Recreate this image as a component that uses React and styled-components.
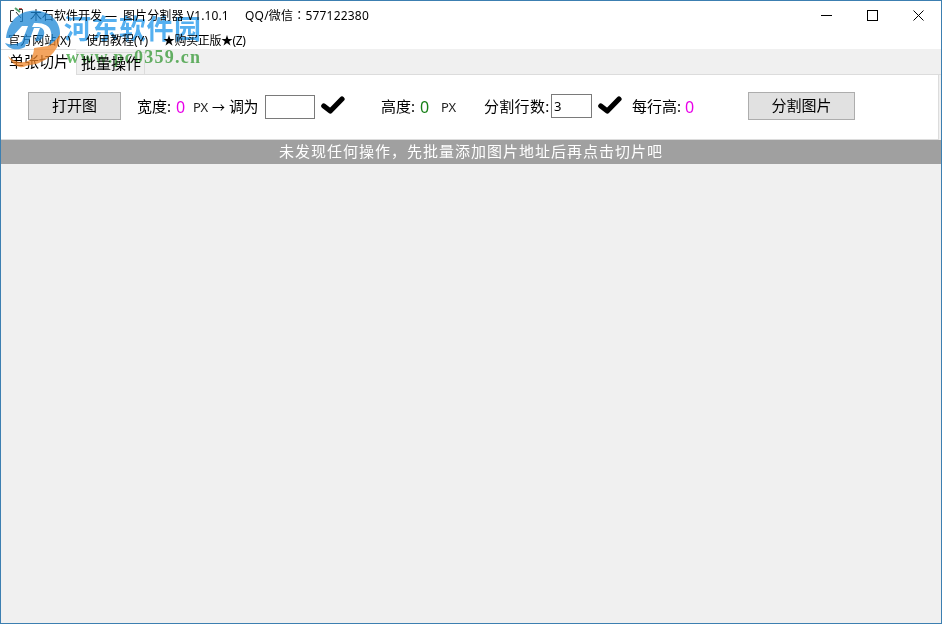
import React from 'react';
import styled, { createGlobalStyle } from 'styled-components';

const Global = createGlobalStyle`
  * { box-sizing: border-box; }
  body { margin: 0; overflow: hidden; }
  button, input { font: inherit; color: inherit; padding: 0; border-radius: 0; outline: none; }
`;

const Window = styled.div`
  position: relative;
  display: flex;
  flex-direction: column;
  width: 942px;
  height: 624px;
  border: 1px solid #3c7fb1;
  background: #f0f0f0;
  color: #000;
  font-family: "Noto Sans", "Noto Sans CJK SC", sans-serif;
  white-space: pre;
`;

const TitleBar = styled.header`
  display: flex;
  align-items: center;
  height: 29px;
  padding-left: 8px;
  background: #fff;
  font-size: 12px;
  line-height: 16px;
`;

const Spacer = styled.div`
  flex: 1;
`;

const Label = styled.span`
  flex: none;
  width: ${p => p.$w}px;
  margin-left: ${p => p.$gap || 0}px;
  letter-spacing: ${p => p.$ls || 0}px;
`;

const TitleText = styled(Label)`
  padding-top: 1px;
`;

const ContactText = styled(Label)`
  padding-bottom: 1px;
`;

const WideColon = styled.span`
  font-family: "Noto Sans CJK TC", sans-serif;
`;

const CaptionButton = styled.button`
  display: grid;
  place-items: center;
  width: 46px;
  height: 29px;
  border: 0;
  background: transparent;
`;

const MenuBar = styled.nav`
  display: flex;
  align-items: center;
  height: 19px;
  padding-left: 7px;
  background: #fff;
  font-size: 12px;
`;

const TabStrip = styled.div`
  display: flex;
  align-items: flex-end;
  height: 26px;
  border-bottom: 1px solid #dcdcdc;
`;

const Tab = styled.div`
  height: ${p => (p.$active ? 26 : 22)}px;
  width: ${p => (p.$active ? 75 : 69)}px;
  margin-bottom: ${p => (p.$active ? -1 : 0)}px;
  padding-left: ${p => (p.$active ? 8 : 4)}px;
  border: 1px solid #dcdcdc;
  border-width: ${p => (p.$active ? '1px 0 0 0' : '1px 1px 0 1px')};
  background: ${p => (p.$active ? '#fff' : '#f0f0f0')};
  font-size: 15px;
  line-height: ${p => (p.$active ? 22 : 20)}px;
`;

const Panel = styled.section`
  display: flex;
  align-items: flex-start;
  height: 65px;
  margin-right: 2px;
  padding: 17px 0 0 27px;
  border-right: 1px solid #dcdcdc;
  border-bottom: 1px solid #dcdcdc;
  background: #fff;
  font-size: 15px;
  line-height: 28px;
`;

const PushButton = styled.button`
  flex: none;
  width: ${p => p.$w}px;
  height: 28px;
  margin-left: ${p => p.$gap || 0}px;
  padding-bottom: 2px;
  border: 1px solid #adadad;
  background: #e1e1e1;
  font-size: 15px;
  line-height: 24px;
`;

const Value = styled(Label)`
  padding-left: 1px;
  color: ${p => p.$color};
  font-size: 16px;
  line-height: 30px;
`;

const Unit = styled(Label)`
  font-size: 13px;
  line-height: 30px;
  color: #222;
`;

const Arrow = styled(Label)`
  font-size: 13px;
  line-height: 30px;
`;

const Field = styled.input`
  flex: none;
  width: ${p => p.$w}px;
  height: 24px;
  margin: ${p => p.$top}px 0 0 ${p => p.$gap || 0}px;
  padding: 0 0 1px 2px;
  border: 1px solid #7a7a7a;
  background: #fff;
  font-size: 13px;
`;

const Check = styled.svg`
  flex: none;
  margin: 4px 0 0 ${p => p.$gap}px;
`;

const Status = styled.div`
  height: 24px;
  background: #a0a0a0;
  color: #fff;
  font-size: 15px;
  letter-spacing: 1px;
  line-height: 22px;
  text-align: center;
`;

const Watermark = styled.svg`
  position: absolute;
  left: -1px;
  top: -1px;
  pointer-events: none;
  mix-blend-mode: ${p => p.$blend || 'normal'};
`;

const AppIcon = () => (
  <svg width="16" height="18" viewBox="0 0 16 18" fill="none" stroke="#333">
    <path d="M5 3.500H1.500V14.500H4" />
    <path d="M10 2.500H13.500V14.500H11M7 5L12 11" />
    <path d="M6 1L11 5" stroke="#54a06b" strokeWidth="2" />
    <path d="M10 1.500h3" stroke="#c55" />
  </svg>
);

const CheckMark = ({ gap }) => (
  <Check $gap={gap} width="24" height="19" viewBox="0 0 24 19">
    <path d="M2.800 10L9.300 15L21 3" fill="none" stroke="#000" strokeWidth="5.200" strokeLinecap="round" strokeLinejoin="round" />
  </Check>
);

const SiteMark = () => (
  <>
    <Watermark width="66" height="76" viewBox="0 0 66 76">
      <g opacity="0.74">
        <path d="M6 38C8 21 19 11 34 10.500C50 10.500 61 22 60 35C58 46 51 54 42 58L46 48C51 44 53 36 50 29C47 24 42 23 34 23L32 27H39C46 28 46 37 39 41H35L40 28H34L28 44H21L28 26H22L11 38Z" fill="#1b87d6" />
        <path d="M5 43C12 46 20 44 27 38L25 47C18 51 9 50 5 43Z" fill="#1b87d6" />
        <path d="M25 66C31 60 34 54 34 48L48 46C53 43 58 38 60 34C61 47 50 60 36 64Z" fill="#f08528" />
        <path d="M8 56C15 63 24 64 32 59C29 65 24 68 20 67C15 66 11 62 8 56Z" fill="#f08528" />
      </g>
    </Watermark>
    <Watermark $blend="multiply" width="215" height="76" viewBox="0 0 215 76">
      <text x="64" y="39" fill="#55b0f0" fontFamily="Noto Sans CJK SC, sans-serif" fontSize="27" fontWeight="700" textLength="137">河东软件园</text>
      <text x="66" y="63" fill="#68b968" fontFamily="Liberation Serif, serif" fontSize="18" fontWeight="700" textLength="134">www.pc0359.cn</text>
    </Watermark>
  </>
);

export default function App() {
  return (
    <Window>
      <Global />
      <TitleBar>
        <AppIcon />
        <TitleText $w={93} $gap={5}>木石软件开发 —</TitleText>
        <TitleText $w={108} $ls={0.12}>图片分割器 V1.10.1</TitleText>
        <ContactText $w={130} $gap={14} $ls={0.2}>QQ/微信<WideColon>：</WideColon>577122380</ContactText>
        <Spacer />
        <CaptionButton aria-label="最小化"><svg width="11" height="11"><path d="M0 5.500H11" stroke="#000" /></svg></CaptionButton>
        <CaptionButton aria-label="最大化"><svg width="11" height="11"><rect x=".5" y=".5" width="10" height="10" fill="none" stroke="#000" /></svg></CaptionButton>
        <CaptionButton aria-label="关闭"><svg width="11" height="11"><path d="M.5 .5L10.500 10.500M10.500 .5L.5 10.500" stroke="#000" /></svg></CaptionButton>
      </TitleBar>
      <MenuBar>
        <Label $w={78} $ls={0.1}>官方网站(X)</Label>
        <Label $w={77}>使用教程(Y)</Label>
        <Label $w={90} $ls={-0.4}>★购买正版★(Z)</Label>
      </MenuBar>
      <TabStrip>
        <Tab $active>单张切片</Tab>
        <Tab>批量操作</Tab>
      </TabStrip>
      <Panel>
        <PushButton $w={93}>打开图</PushButton>
        <Label $w={38} $gap={16}>宽度:</Label>
        <Value $w={18} $color="#e800e8">0</Value>
        <Unit $w={19}>PX</Unit>
        <Arrow $w={17}>→</Arrow>
        <Label $w={36} $ls={-0.5}>调为</Label>
        <Field $w={50} $top={3} defaultValue="" />
        <CheckMark gap={6} />
        <Label $w={38} $gap={36}>高度:</Label>
        <Value $w={22} $color="#188018">0</Value>
        <Unit $w={43}>PX</Unit>
        <Label $w={67} $ls={0.3}>分割行数:</Label>
        <Field $w={41} $top={2} defaultValue="3" />
        <CheckMark gap={6} />
        <Label $w={52} $gap={10}>每行高:</Label>
        <Value $w={64} $color="#e800e8">0</Value>
        <PushButton $w={107}>分割图片</PushButton>
      </Panel>
      <Status>未发现任何操作，先批量添加图片地址后再点击切片吧</Status>
      <SiteMark />
    </Window>
  );
}
